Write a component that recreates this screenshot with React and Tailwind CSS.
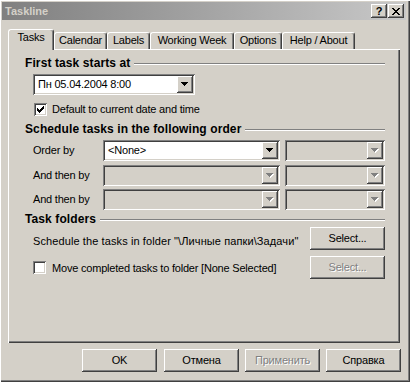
import React from "react";

const raised =
  "shadow-[inset_-1px_-1px_#404040,inset_1px_1px_#ffffff,inset_-2px_-2px_#808080,inset_2px_2px_#d4d0c8]";
const sunken =
  "shadow-[inset_1px_1px_#808080,inset_-1px_-1px_#ffffff,inset_2px_2px_#404040,inset_-2px_-2px_#d4d0c8]";
const disabledText = "text-[#808080] [text-shadow:1px_1px_0_#ffffff]";

function Arrow({ disabled }) {
  const d = "M0 0h7v1H0z M1 1h5v1H1z M2 2h3v1H2z M3 3h1v1H3z";
  return (
    <svg width="8" height="5" viewBox="0 0 8 5" shapeRendering="crispEdges">
      {disabled ? (
        <>
          <path d={d} fill="#ffffff" transform="translate(1 1)" />
          <path d={d} fill="#808080" />
        </>
      ) : (
        <path d={d} fill="#000000" />
      )}
    </svg>
  );
}

function Combo({ className, value, enabled }) {
  return (
    <div
      className={`flex h-[21px] p-[2px] ${sunken} ${enabled ? "bg-white" : "bg-[#d4d0c8]"} ${className}`}
    >
      <div className="flex-1 pl-[3px] leading-[17px] whitespace-nowrap overflow-hidden">{value}</div>
      <div className={`w-[16px] h-[17px] bg-[#d4d0c8] flex items-center justify-center ${raised}`}>
        <Arrow disabled={!enabled} />
      </div>
    </div>
  );
}

function Check({ checked }) {
  return (
    <div className={`w-[13px] h-[13px] bg-white shrink-0 ${sunken} relative`}>
      {checked && (
        <svg
          className="absolute left-[3px] top-[3px]"
          width="7"
          height="7"
          viewBox="0 0 7 7"
          shapeRendering="crispEdges"
        >
          <path
            d="M6 0h1v1H6z M5 1h2v1H5z M0 2h1v1H0z M4 2h3v1H4z M0 3h2v1H0z M3 3h3v1H3z M0 4h5v1H0z M1 5h3v1H1z M2 6h1v1H2z"
            fill="#000"
          />
        </svg>
      )}
    </div>
  );
}

function Button({ children, disabled, className = "" }) {
  return (
    <div
      className={`w-[75px] h-[23px] bg-[#d4d0c8] flex items-center justify-center ${raised} ${
        disabled ? disabledText : ""
      } ${className}`}
    >
      {children}
    </div>
  );
}

function Heading({ children }) {
  return (
    <div className="flex items-start h-[14px]">
      <span className="text-[12px] font-bold leading-[14px] tracking-[0.1px] whitespace-nowrap">{children}</span>
      <div className="flex-1 ml-[4px] mt-[7px] h-[2px] border-t border-t-[#808080] border-b border-b-white" />
    </div>
  );
}

function Tab({ label, w, selected }) {
  if (selected) {
    return (
      <div
        className={`${w} relative z-10 h-[21px] -mb-[1px] bg-[#d4d0c8] border-t border-l border-white border-r border-r-[#404040] rounded-t-[3px] shadow-[inset_-1px_0_#808080] flex justify-center pt-[1px] leading-[13px]`}
      >
        {label}
      </div>
    );
  }
  return (
    <div
      className={`${w} h-[17px] bg-[#d4d0c8] border-t border-l border-white border-r border-r-[#404040] rounded-t-[3px] shadow-[inset_-1px_0_#808080] flex justify-center pt-[1px] leading-[13px] whitespace-nowrap`}
    >
      {label}
    </div>
  );
}

function OrderRow({ label, first, className = "" }) {
  return (
    <div className={`flex items-center ml-[8px] ${className}`}>
      <div className="w-[70px] whitespace-nowrap">{label}</div>
      <Combo className="w-[177px]" value={first ? "<None>" : ""} enabled={first} />
      <Combo className="w-[100px] ml-[5px]" value="" enabled={false} />
    </div>
  );
}

export default function App() {
  return (
    <div className="w-[410px] h-[382px] bg-[#d4d0c8] font-['Liberation_Sans',Arial,sans-serif] text-[11px] tracking-[-0.2px] text-black flex flex-col pt-[2px] pl-[2px] pr-[4px] pb-[4px] shadow-[inset_1px_1px_#ffffff,inset_-1px_-1px_#404040,inset_-2px_-2px_#808080] overflow-hidden select-none">
      {/* Title bar */}
      <div className="h-[18px] flex items-center pl-[3px] pr-[2px] bg-linear-to-r from-[#808080] to-[#c8c8c8]">
        <span className="font-bold text-[#d4d0c8] tracking-normal">Taskline</span>
        <div className="ml-auto flex gap-[1px]">
          <div className={`w-[16px] h-[14px] bg-[#d4d0c8] ${raised} flex items-center justify-center font-bold text-[11px] leading-none tracking-normal`}>
            ?
          </div>
          <div className={`w-[16px] h-[14px] bg-[#d4d0c8] ${raised} flex items-center justify-center`}>
            <svg width="8" height="7" viewBox="0 0 8 7" shapeRendering="crispEdges">
              <path
                d="M0 0h2v1H0z M6 0h2v1H6z M1 1h2v1H1z M5 1h2v1H5z M2 2h4v1H2z M3 3h2v1H3z M2 4h4v1H2z M1 5h2v1H1z M5 5h2v1H5z M0 6h2v1H0z M6 6h2v1H6z"
                fill="#000"
              />
            </svg>
          </div>
        </div>
      </div>

      {/* Tabs */}
      <div className="mt-[9px] h-[20px] flex items-end pl-[6px]">
        <Tab label="Tasks" w="w-[46px]" selected />
        <Tab label="Calendar" w="w-[53px]" />
        <Tab label="Labels" w="w-[43px]" />
        <Tab label="Working Week" w="w-[84px]" />
        <Tab label="Options" w="w-[48px]" />
        <Tab label="Help / About" w="w-[73px]" />
      </div>

      {/* Panel */}
      <div className="ml-[6px] w-[392px] h-[294px] shadow-[inset_1px_1px_#ffffff,inset_-1px_-1px_#404040,inset_-2px_-2px_#808080] flex flex-col pt-[7px] pl-[17px] pr-[15px]">
        <Heading>First task starts at</Heading>
        <Combo className="w-[162px] ml-[8px] mt-[4px]" value="Пн 05.04.2004 8:00" enabled />
        <div className="flex items-center ml-[9px] mt-[8px] gap-[5px]">
          <Check checked />
          <span className="leading-[13px] whitespace-nowrap">Default to current date and time</span>
        </div>

        <div className="mt-[6px]">
          <Heading>Schedule tasks in the following order</Heading>
        </div>
        <OrderRow label="Order by" first className="mt-[4px]" />
        <OrderRow label="And then by" className="mt-[4px]" />
        <OrderRow label="And then by" className="mt-[3px]" />

        <div className="mt-[2px]">
          <Heading>Task folders</Heading>
        </div>
        <div className="flex items-start ml-[8px] mt-[1px]">
          <span className="mt-[8px] leading-[13px] tracking-[0.1px] whitespace-nowrap">
            Schedule the tasks in folder "\Личные папки\Задачи"
          </span>
          <Button className="ml-auto">Select...</Button>
        </div>
        <div className="flex items-center ml-[8px] mt-[6px]">
          <Check />
          <span className="ml-[6px] mt-[1px] leading-[13px] whitespace-nowrap">
            Move completed tasks to folder [None Selected]
          </span>
          <Button className="ml-auto" disabled>
            Select...
          </Button>
        </div>
      </div>

      {/* Bottom buttons */}
      <div className="mt-[6px] flex pl-[80px]">
        <Button>OK</Button>
        <Button className="ml-[7px]">Отмена</Button>
        <Button className="ml-[6px]" disabled>
          Применить
        </Button>
        <Button className="ml-[6px]">Справка</Button>
      </div>
    </div>
  );
}
